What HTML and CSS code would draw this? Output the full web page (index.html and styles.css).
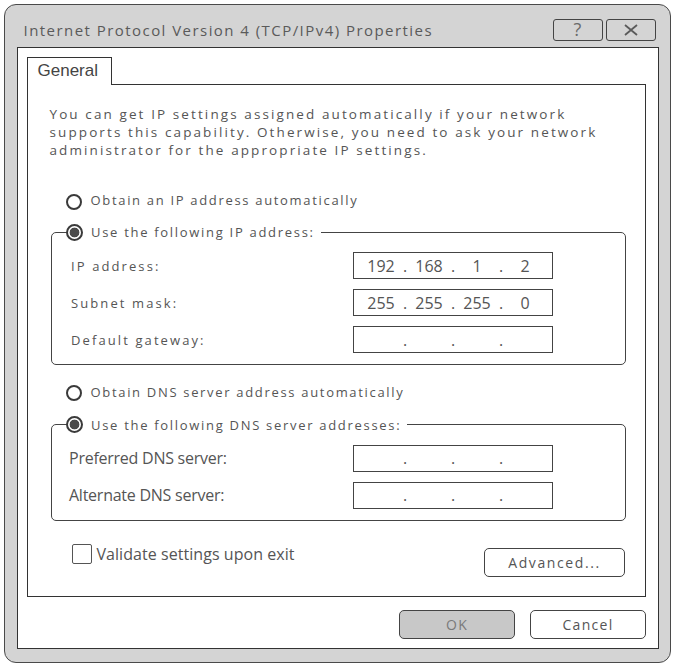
FILE: index.html
```html
<!DOCTYPE html>
<html lang="en">
<head>
    <meta charset="UTF-8">
    <title>Internet Protocol Version 4 (TCP/IPv4) Properties</title>
    <link rel="stylesheet" href="styles.css">
</head>
<body>
    <div class="window">
        <div class="titlebar">
            <span class="title">Internet Protocol Version 4 (TCP/IPv4) Properties</span>
            <div class="caption-buttons">
                <button class="cap-btn">?</button>
                <button class="cap-btn">
                    <svg width="16" height="12" viewBox="0 0 16 12">
                        <path d="M2 1 L14 11 M14 1 L2 11" stroke="#5a5a5a" stroke-width="1.8" fill="none"/>
                    </svg>
                </button>
            </div>
        </div>

        <div class="client">
            <div class="tabs">
                <div class="tab">General</div>
            </div>

            <div class="tab-page">
                <p class="intro">
                    You can get IP settings assigned automatically if your network<br>
                    supports this capability. Otherwise, you need to ask your network<br>
                    administrator for the appropriate IP settings.
                </p>

                <label class="radio-row first">
                    <span class="radio"></span>Obtain an IP address automatically
                </label>

                <fieldset class="group">
                    <legend><span class="radio checked"></span>Use the following IP address:</legend>
                    <div class="field-row">
                        <span class="field-label">IP address:</span>
                        <div class="ip-box">
                            <span class="octet">192</span><span class="dot">.</span><span class="octet">168</span><span class="dot">.</span><span class="octet">1</span><span class="dot">.</span><span class="octet">2</span>
                        </div>
                    </div>
                    <div class="field-row">
                        <span class="field-label">Subnet mask:</span>
                        <div class="ip-box">
                            <span class="octet">255</span><span class="dot">.</span><span class="octet">255</span><span class="dot">.</span><span class="octet">255</span><span class="dot">.</span><span class="octet">0</span>
                        </div>
                    </div>
                    <div class="field-row">
                        <span class="field-label">Default gateway:</span>
                        <div class="ip-box">
                            <span class="octet"></span><span class="dot">.</span><span class="octet"></span><span class="dot">.</span><span class="octet"></span><span class="dot">.</span><span class="octet"></span>
                        </div>
                    </div>
                </fieldset>

                <label class="radio-row second">
                    <span class="radio"></span>Obtain DNS server address automatically
                </label>

                <fieldset class="group dns">
                    <legend><span class="radio checked"></span>Use the following DNS server addresses:</legend>
                    <div class="field-row">
                        <span class="field-label plain">Preferred DNS server:</span>
                        <div class="ip-box">
                            <span class="octet"></span><span class="dot">.</span><span class="octet"></span><span class="dot">.</span><span class="octet"></span><span class="dot">.</span><span class="octet"></span>
                        </div>
                    </div>
                    <div class="field-row">
                        <span class="field-label plain">Alternate DNS server:</span>
                        <div class="ip-box">
                            <span class="octet"></span><span class="dot">.</span><span class="octet"></span><span class="dot">.</span><span class="octet"></span><span class="dot">.</span><span class="octet"></span>
                        </div>
                    </div>
                </fieldset>

                <div class="page-footer">
                    <label class="check-row"><span class="checkbox"></span>Validate settings upon exit</label>
                    <button class="btn btn-advanced">Advanced...</button>
                </div>
            </div>

            <div class="dialog-buttons">
                <button class="btn btn-ok">OK</button>
                <button class="btn">Cancel</button>
            </div>
        </div>
    </div>
</body>
</html>
```

FILE: styles.css
```css
* {
    margin: 0;
    padding: 0;
    box-sizing: border-box;
}

body {
    font-family: 'Open Sans', 'DejaVu Sans', sans-serif;
    background: #ffffff;
    color: #555555;
}

.window {
    margin: 4px 0 0 4px;
    width: 667px;
    height: 659px;
    border: 1.5px solid #4a4a4a;
    border-radius: 12px;
    background: #d4d4d4;
    padding: 0 11.5px;
    display: flex;
    flex-direction: column;
}

.titlebar {
    height: 41.5px;
    padding-top: 13.5px;
    display: flex;
    justify-content: space-between;
    align-items: flex-start;
}

.title {
    padding-left: 7px;
    font-size: 15px;
    line-height: 22px;
    letter-spacing: 1.45px;
    color: #5a5a5a;
}

.caption-buttons {
    display: flex;
    gap: 3px;
    margin-right: 3px;
}

.cap-btn {
    width: 50px;
    height: 22px;
    border: 1.5px solid #444;
    border-radius: 3px;
    background: #d4d4d4;
    color: #6a6a6a;
    font-family: 'Open Sans', sans-serif;
    font-size: 18px;
    line-height: 19px;
    display: flex;
    align-items: center;
    justify-content: center;
}

.client {
    height: 602px;
    background: #fff;
    border: 1.5px solid #333;
    padding: 9.5px 11.5px 0 9.5px;
}

.tabs {
    display: flex;
}

.tab {
    position: relative;
    z-index: 1;
    width: 85px;
    height: 28px;
    margin-bottom: -1.5px;
    border: 1.5px solid #333;
    border-bottom: none;
    background: #fff;
    padding-left: 9.5px;
    font-family: 'Liberation Sans', Arial, sans-serif;
    font-size: 17px;
    line-height: 26px;
    color: #444;
}

.tab-page {
    height: 513.5px;
    border: 1.5px solid #333;
    padding: 20.5px 19px 0 21.5px;
}

.intro {
    font-size: 13.5px;
    line-height: 18px;
    letter-spacing: 2.1px;
    white-space: nowrap;
}

.radio-row {
    display: flex;
    align-items: center;
    height: 20px;
    margin-left: 16.5px;
    font-size: 13px;
    letter-spacing: 1.68px;
}

.radio-row.first {
    margin-top: 31px;
}

.radio-row.second {
    margin-top: 16.5px;
}

.radio {
    flex: none;
    width: 16px;
    height: 16px;
    margin: 3px 8.5px 0 0;
    border: 2px solid #3a3a3a;
    border-radius: 50%;
    background: #fff;
}

.radio.checked {
    width: 17px;
    height: 17px;
    margin: 0 8px 0 -0.5px;
    background: radial-gradient(circle, #4a4a4a 0 4.6px, #fff 5.2px);
}

.group {
    margin: 12px 0 0 1.5px;
    border: 1.5px solid #444;
    border-radius: 5px;
    padding: 10px 0 11px 14.5px;
    min-inline-size: 0;
}

.group legend {
    display: flex;
    align-items: center;
    height: 20px;
    padding-right: 6px;
    font-size: 13px;
    letter-spacing: 1.7px;
}

.group.dns {
    margin-top: 13px;
}

.field-row {
    display: grid;
    grid-template-columns: 286px 200px;
    align-items: center;
}

.field-row + .field-row {
    margin-top: 10px;
}

.field-label {
    padding-left: 4.5px;
    font-size: 13px;
    letter-spacing: 2.1px;
}

.field-label.plain {
    padding-left: 2.5px;
    font-size: 16px;
    letter-spacing: -0.25px;
}

.ip-box {
    height: 27px;
    border: 1.5px solid #444;
    padding-left: 8.5px;
    display: flex;
    align-items: center;
    font-size: 16px;
    color: #555;
}

.octet {
    width: 38px;
    text-align: center;
}

.dot {
    width: 10px;
    text-align: center;
}

.page-footer {
    margin: 23.5px 0 0 22px;
    display: flex;
    justify-content: space-between;
    align-items: flex-start;
}

.check-row {
    display: flex;
    align-items: center;
    font-size: 16px;
    letter-spacing: 0.05px;
    height: 20px;
}

.checkbox {
    width: 20px;
    height: 20px;
    margin-right: 5px;
    border: 1.5px solid #555;
    border-radius: 2px;
}

.btn {
    width: 116px;
    height: 29px;
    border: 1.5px solid #444;
    border-radius: 5px;
    background: #fff;
    font-family: 'Open Sans', sans-serif;
    font-size: 14px;
    letter-spacing: 1.3px;
    color: #555;
}

.btn-advanced {
    width: 141px;
    margin: 4px 1px 0 0;
    letter-spacing: 1.6px;
}

.dialog-buttons {
    margin-top: 13px;
    display: flex;
    justify-content: flex-end;
    gap: 15px;
}

.btn-ok {
    background: #c8c8c8;
    color: #7a7a7a;
}
```
